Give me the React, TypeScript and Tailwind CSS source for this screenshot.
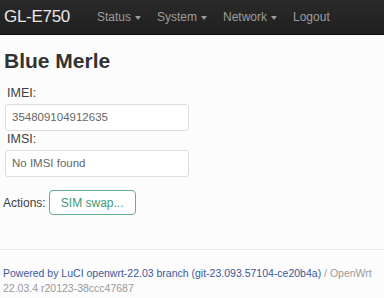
function NavItem({ label, caret = true }: { label: string; caret?: boolean }) {
  return (
    <span className="flex items-center gap-[4px] text-[12px] text-[#9d9d9d]">
      {label}
      {caret && <span className="inline-block w-0 h-0 border-x-[3.5px] border-x-transparent border-t-[4px] border-t-[#9d9d9d] mt-[2px]" />}
    </span>
  );
}

function Field({ label, value }: { label: string; value: string }) {
  return (
    <div className="flex flex-col">
      <label className="text-[12.5px] text-[#404040] ml-[2px] leading-[15px]">{label}</label>
      <div className="mt-[3px] w-[184px] h-[27px] border border-[#dcdcdc] rounded-[3px] bg-white px-[6px] flex items-center text-[11.5px] text-[#666]">
        {value}
      </div>
    </div>
  );
}

export default function App() {
  return (
    <div className="w-[384px] h-[298px] bg-[#fcfcfd] font-['Liberation_Sans',Arial,sans-serif] overflow-hidden">
      <header className="h-[35px] bg-gradient-to-b from-[#2a2a2a] to-[#1f1f1f] border-b border-[#101010] flex items-center">
        <span className="ml-[4px] text-[17px] text-[#e8e8e8] tracking-[-0.3px]">GL-E750</span>
        <nav className="flex items-center gap-[16px] ml-[27px]">
          <NavItem label="Status" />
          <NavItem label="System" />
          <NavItem label="Network" />
          <NavItem label="Logout" caret={false} />
        </nav>
      </header>

      <main className="px-[4px]">
        <h2 className="mt-[13px] text-[21px] font-bold text-[#333] leading-[26px]">Blue Merle</h2>
        <div className="mt-[12px] flex flex-col gap-[1px] ml-[1px]">
          <Field label="IMEI:" value="354809104912635" />
          <Field label="IMSI:" value="No IMSI found" />
        </div>
        <div className="mt-[13px] flex items-center gap-[3px] ml-[-1px]">
          <span className="text-[12px] text-[#404040]">Actions:</span>
          <button className="w-[87px] h-[25px] border border-[#5fae93] rounded-[4px] text-[12px] text-[#3a9a78] bg-white">
            SIM swap...
          </button>
        </div>
      </main>

      <div className="mt-[34px] border-t border-[#ececec]" />
      <footer className="px-[3px] pt-[16px] text-[10.5px] leading-[15px] text-[#999]">
        <div className="whitespace-nowrap">
          <span className="text-[#3b5998]">Powered by LuCI openwrt-22.03 branch (git-23.093.57104-ce20b4a)</span>
          <span> / OpenWrt</span>
        </div>
        <div>22.03.4 r20123-38ccc47687</div>
      </footer>
    </div>
  );
}
